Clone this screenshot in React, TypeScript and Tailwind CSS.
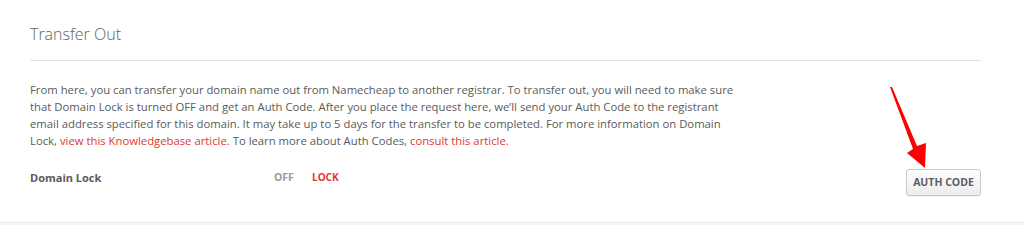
import { ReactNode } from 'react';

const font = { fontFamily: '"Open Sans", Lato, sans-serif' };

function RedLink({ children }: { children: ReactNode }) {
  return <a className="cursor-pointer text-[#e2372b]">{children}</a>;
}

/** Red annotation arrow pointing at the button. */
function PointerArrow() {
  return (
    <svg
      className="pointer-events-none absolute left-[886px] top-[84px]"
      width="46"
      height="88"
      viewBox="886 84 46 88"
      aria-hidden="true"
    >
      <polygon
        points="890,87 892,87 917,146 926,143 925,168 907,153 913,149"
        fill="#ff0000"
      />
    </svg>
  );
}

export default function App() {
  return (
    <div className="relative h-[225px] w-[1024px] overflow-hidden bg-white" style={font}>
      <section className="border-b border-[#ececec] pl-[30px] pr-[43px] pb-[26px]">
        <header className="border-b border-[#e2e2e2] pt-[24px] pb-[16px]">
          <h2 className="text-[16px] font-light leading-[20px] text-[#616161]">Transfer Out</h2>
        </header>

        <p className="w-[712px] pt-[20px] text-[11.3px] leading-[17px] text-[#5a5a5a]">
          From here, you can transfer your domain name out from Namecheap to another registrar. To
          transfer out, you will need to make sure that Domain Lock is turned OFF and get an Auth Code.
          After you place the request here, we&rsquo;ll send your Auth Code to the registrant email
          address specified for this domain. It may take up to 5 days for the transfer to be completed.
          For more information on Domain Lock, <RedLink>view this Knowledgebase article.</RedLink> To
          learn more about Auth Codes, <RedLink>consult this article.</RedLink>
        </p>

        <div className="mt-[20px] flex items-end justify-between">
          <div className="flex items-center pb-[10px] leading-[17px]">
            <span className="w-[244px] text-[11px] font-bold text-[#5a5a5a]">Domain Lock</span>
            <span className="w-[38px] text-[10.5px] font-bold text-[#9a9a9a]">OFF</span>
            <button className="text-[10px] font-bold text-[#e2372b]">LOCK</button>
          </div>

          <button className="h-[27px] w-[75px] rounded-[3px] border border-[#c9c9c9] bg-gradient-to-b from-white to-[#ececec] text-[10.5px] font-bold text-[#5e5e5e] shadow-[0_1px_1px_rgba(0,0,0,0.06)]">
            AUTH CODE
          </button>
        </div>
      </section>
      <div className="h-[4px] bg-[#f6f6f6]" />
      <PointerArrow />
    </div>
  );
}
